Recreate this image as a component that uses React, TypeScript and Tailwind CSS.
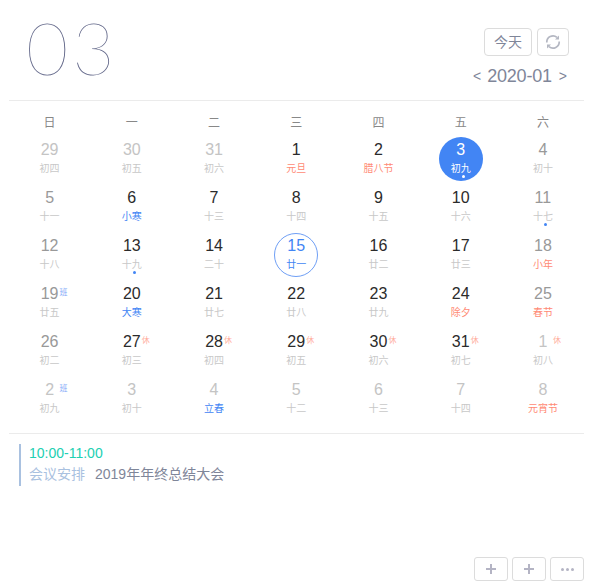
import React from "react";

type Day = {
  n: number;
  l: string;
  dim?: boolean;
  mid?: boolean;
  kind?: "red" | "blue";
  badge?: "班" | "休";
  dot?: boolean;
  selected?: boolean;
  today?: boolean;
};

const rows: Day[][] = [
  [
    { n: 29, l: "初四", dim: true },
    { n: 30, l: "初五", dim: true },
    { n: 31, l: "初六", dim: true },
    { n: 1, l: "元旦", kind: "red" },
    { n: 2, l: "腊八节", kind: "red" },
    { n: 3, l: "初九", selected: true, dot: true },
    { n: 4, l: "初十", mid: true },
  ],
  [
    { n: 5, l: "十一", mid: true },
    { n: 6, l: "小寒", kind: "blue" },
    { n: 7, l: "十三" },
    { n: 8, l: "十四" },
    { n: 9, l: "十五" },
    { n: 10, l: "十六" },
    { n: 11, l: "十七", mid: true, dot: true },
  ],
  [
    { n: 12, l: "十八", mid: true },
    { n: 13, l: "十九", dot: true },
    { n: 14, l: "二十" },
    { n: 15, l: "廿一", today: true },
    { n: 16, l: "廿二" },
    { n: 17, l: "廿三" },
    { n: 18, l: "小年", mid: true, kind: "red" },
  ],
  [
    { n: 19, l: "廿五", mid: true, badge: "班" },
    { n: 20, l: "大寒", kind: "blue" },
    { n: 21, l: "廿七" },
    { n: 22, l: "廿八" },
    { n: 23, l: "廿九" },
    { n: 24, l: "除夕", kind: "red" },
    { n: 25, l: "春节", mid: true, kind: "red" },
  ],
  [
    { n: 26, l: "初二", mid: true },
    { n: 27, l: "初三", badge: "休" },
    { n: 28, l: "初四", badge: "休" },
    { n: 29, l: "初五", badge: "休" },
    { n: 30, l: "初六", badge: "休" },
    { n: 31, l: "初七", badge: "休" },
    { n: 1, l: "初八", dim: true, badge: "休" },
  ],
  [
    { n: 2, l: "初九", dim: true, badge: "班" },
    { n: 3, l: "初十", dim: true },
    { n: 4, l: "立春", dim: true, kind: "blue" },
    { n: 5, l: "十二", dim: true },
    { n: 6, l: "十三", dim: true },
    { n: 7, l: "十四", dim: true },
    { n: 8, l: "元宵节", dim: true, kind: "red" },
  ],
];

const week = ["日", "一", "二", "三", "四", "五", "六"];

function Cell({ d }: { d: Day }) {
  const numColor = d.selected
    ? "text-white"
    : d.today
      ? "text-[#4285f4]"
      : d.dim
        ? "text-[#c4c4c4]"
        : d.mid
          ? "text-[#999999]"
          : "text-[#2b2b2b]";
  const lunarColor = d.selected
    ? "text-white"
    : d.today
      ? "text-[#4285f4]"
      : d.kind === "red"
        ? "text-[#ff8a75]"
        : d.kind === "blue"
          ? "text-[#4285f4]"
          : "text-[#c8c8c8]";
  const shape = d.selected
    ? "bg-[#4285f4] rounded-full"
    : d.today
      ? "border border-[#6f9ff5] rounded-full"
      : "";
  return (
    <div className="flex justify-center">
      <div className={`relative flex h-[44px] w-[44px] flex-col items-center ${shape}`}>
        <span className={`text-[16px] leading-[20px] ${d.today ? "mt-[2px]" : "mt-[3px]"} ${numColor}`}>{d.n}</span>
        <span className={`mt-[2px] whitespace-nowrap text-[10px] leading-[14px] ${lunarColor}`}>{d.l}</span>
        {d.badge && (
          <span
            className={`absolute left-[32px] top-[7px] text-[8px] leading-[10px] ${
              d.badge === "班" ? "text-[#7fa8f8]" : "text-[#ffb09f]"
            }`}
          >
            {d.badge}
          </span>
        )}
        {d.dot && (
          <span
            className={`absolute left-[23px] top-[38px] h-[3px] w-[3px] rounded-full ${
              d.selected ? "bg-white" : "bg-[#4285f4]"
            }`}
          />
        )}
      </div>
    </div>
  );
}

export default function App() {
  return (
    <div className="flex h-[587px] w-[592px] flex-col bg-white pl-[9px] pr-[8px] font-['Liberation_Sans','Noto_Sans_CJK_SC',sans-serif]">
      <header className="flex h-[101px] shrink-0 justify-between border-b border-[#ebebeb]">
        <div className="pl-[17px] pt-[4px] font-['Lato','Liberation_Sans',sans-serif] text-[73px] font-thin leading-[86px] tracking-[4px] text-[#666b8c]">
          03
        </div>
        <div className="flex flex-col items-end pr-[15px] pt-[28px]">
          <div className="flex gap-[5px]">
            <button className="flex h-[28px] w-[48px] items-center justify-center rounded-[4px] border border-[#dcdcdc] text-[14px] text-[#7f8699]">
              今天
            </button>
            <button className="flex h-[28px] w-[32px] items-center justify-center rounded-[4px] border border-[#dcdcdc]">
              <svg width="16" height="16" viewBox="0 0 16 16" fill="none" stroke="#b4b7c2" strokeWidth="1.7">
                <path d="M1.8 8.5a6.2 6.2 0 0 1 10.2-5.1" />
                <path d="M14.2 7.5a6.2 6.2 0 0 1-10.2 5.1" />
                <path d="M14 1.5v4h-4z" fill="#b4b7c2" stroke="none" />
                <path d="M2 14.5v-4h4z" fill="#b4b7c2" stroke="none" />
              </svg>
            </button>
          </div>
          <div className="mt-[8px] flex items-center pr-[2px] text-[#7f8699]">
            <span className="text-[14px] leading-[24px]">&lt;</span>
            <span className="ml-[6px] mr-[7px] text-[18px] leading-[24px] tracking-[-0.2px]">2020-01</span>
            <span className="text-[14px] leading-[24px]">&gt;</span>
          </div>
        </div>
      </header>

      <div className="-ml-[0.5px] grid shrink-0 grid-cols-7 pt-[12px]">
        {week.map((w) => (
          <div key={w} className="text-center text-[12px] leading-[20px] text-[#888888]">
            {w}
          </div>
        ))}
      </div>

      <div className="-ml-[0.5px] mt-[4px] flex shrink-0 flex-col gap-[4px]">
        {rows.map((r, i) => (
          <div key={i} className="grid grid-cols-7">
            {r.map((d, j) => (
              <Cell key={j} d={d} />
            ))}
          </div>
        ))}
      </div>

      <div className="mt-[12px] shrink-0 border-t border-[#ebebeb] pl-[10px] pt-[10px]">
        <div className="border-l-2 border-[#a9c1e0] pl-[8px]">
          <div className="text-[14px] leading-[18px] text-[#22d0b2]">10:00-11:00</div>
          <div className="flex pb-[2px] pt-[2px] text-[14px] leading-[20px]">
            <span className="text-[#a9c1e0]">会议安排</span>
            <span className="ml-[10px] text-[#7f8699]">2019年年终总结大会</span>
          </div>
        </div>
      </div>

      <footer className="mt-auto flex justify-end gap-[4px] pb-[6px]">
        {[0, 1].map((k) => (
          <button key={k} className="flex h-[24px] w-[34px] items-center justify-center rounded-[3px] border border-[#dcdcdc]">
            <svg width="12" height="12" viewBox="0 0 12 12">
              <path d="M5 1h2v4h4v2H7v4H5V7H1V5h4z" fill="#b4b4c4" />
            </svg>
          </button>
        ))}
        <button className="flex h-[24px] w-[34px] items-center justify-center gap-[2px] rounded-[3px] border border-[#dcdcdc]">
          <span className="h-[3px] w-[3px] rounded-full bg-[#b4b4c4]" />
          <span className="h-[3px] w-[3px] rounded-full bg-[#b4b4c4]" />
          <span className="h-[3px] w-[3px] rounded-full bg-[#b4b4c4]" />
        </button>
      </footer>
    </div>
  );
}
